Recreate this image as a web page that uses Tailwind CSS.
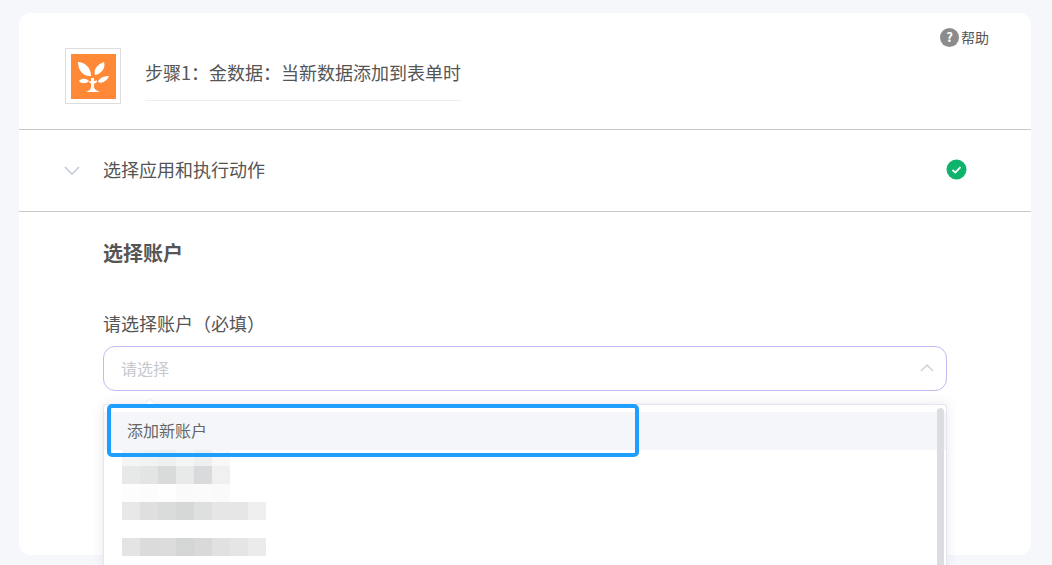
<!DOCTYPE html>
<html lang="zh-CN">
<head>
	<meta charset="UTF-8">
	<script src="https://cdn.jsdelivr.net/npm/@tailwindcss/browser@4"></script>
	<title>步骤1</title>
</head>
<body class="relative h-[565px] overflow-hidden bg-[#f6f7fb] pt-[13px] pl-[19px] font-['Noto_Sans_CJK_SC','Liberation_Sans',sans-serif] text-[#555]">

<div class="relative h-[542px] w-[1012px] rounded-xl bg-white">
	<!-- Header -->
	<div class="relative flex h-[117px] items-start border-b border-[#c8c8c8] pt-[35px] pl-[46px]">
		<div class="flex h-[56px] w-[56px] items-center justify-center border border-[#ddd]">
			<svg class="h-[45px] w-[45px]" viewBox="0 0 45 45">
				<rect width="45" height="45" fill="#ff8936"/>
				<g fill="#fff">
					<path d="M7 8C13 8 20 13 20 22C13 23 7 17 7 8Z"/>
					<path d="M33 8C35 14 30 20 24 21C22 15 27 10 33 8Z"/>
					<path d="M8 27C10 24 15 24 18 27C15 30 10 30 8 27Z"/>
					<path d="M38 22C36 27 31 30 27 28C28 24 33 22 38 22Z"/>
					<path d="M20 24H23V27L26 26.5V28L23 30V33C23 35 26 37 29 38H15C18 37 20 35 20 33V29.500L18 28V27L20 27.500Z"/>
				</g>
			</svg>
		</div>
		<div class="ml-6 h-[53px] w-[316px] border-b border-[#eee] pt-[11px] text-[18px] leading-[26px] whitespace-nowrap">步骤1：金数据：当新数据添加到表单时</div>
		<div class="absolute top-[14px] right-[42px] flex items-center gap-[2px] text-sm leading-5">
			<span class="flex h-[19px] w-[19px] items-center justify-center rounded-full bg-[#8c8c8c] text-[13px] font-bold text-white">?</span>
			<span>帮助</span>
		</div>
	</div>

	<!-- Collapsed step -->
	<div class="flex h-[82px] items-center border-b border-[#c8c8c8] pr-[64px] pl-[45px]">
		<svg class="h-[9px] w-[16px]" viewBox="0 0 16 9" fill="none" stroke="#b9c6d6" stroke-width="1.3">
			<path d="M1 1L8 8L15 1"/>
		</svg>
		<span class="mb-[2px] ml-[23px] text-[18px]">选择应用和执行动作</span>
		<svg class="mt-[-2px] ml-auto h-[21px] w-[21px]" viewBox="0 0 21 21">
			<circle cx="10.5" cy="10.5" r="10" fill="#0fb46c"/>
			<path d="M6.5 11L9.3 13.6L14.5 8.2" fill="none" stroke="#fff" stroke-width="1.8"/>
		</svg>
	</div>

	<!-- Account form -->
	<div class="pt-[26px] pl-[84px]">
		<h3 class="text-xl leading-[30px] font-bold">选择账户</h3>
		<label class="mt-[42px] block text-[18px] leading-[26px]">请选择账户（必填）</label>
		<div class="mt-[10px] flex h-[45px] w-[844px] items-center justify-between rounded-xl border border-[#c3baf3] pr-[12px] pb-[2px] pl-[17px] text-base text-[#c6c8cf]">
			<span>请选择</span>
			<svg class="mt-[1px] h-[8px] w-[14px]" viewBox="0 0 14 8" fill="none" stroke="#cdcfd3" stroke-width="1.3">
				<path d="M1 7L7 1L13 7"/>
			</svg>
		</div>
	</div>
</div>

<!-- Dropdown, runs past the bottom of the card -->
<div class="absolute top-[404px] left-[103px] h-[161px] w-[844px] rounded-t border border-b-0 border-[#e6e6f2] bg-white pt-[7px] shadow-[0_0_12px_rgba(40,40,80,0.1)]">
	<div class="absolute top-[-5px] left-[42px] h-2 w-2 rotate-45 border-t border-l border-[#eeeef4] bg-white"></div>
	<div class="h-[38px] bg-[#f5f6fa]"></div>
	<div class="ml-[18px] flex h-[16px]">
		<i class="w-[18px] bg-[#f3f4f4]"></i><i class="w-[18px] bg-[#f1f2f2]"></i><i class="w-[18px] bg-[#eeefef]"></i><i class="w-[18px] bg-[#f3f4f4]"></i><i class="w-[18px] bg-[#eeefef]"></i><i class="w-[18px] bg-[#f8f8f8]"></i>
	</div>
	<div class="ml-[18px] flex h-[18px]">
		<i class="w-[18px] bg-[#e7e8e8]"></i><i class="w-[18px] bg-[#e3e4e4]"></i><i class="w-[18px] bg-[#d9dada]"></i><i class="w-[18px] bg-[#e8e9e9]"></i><i class="w-[18px] bg-[#d9dadb]"></i><i class="w-[18px] bg-[#f0f0f0]"></i>
	</div>
	<div class="ml-[18px] flex h-[18px]">
		<i class="w-[18px] bg-[#fdfdfd]"></i><i class="w-[18px] bg-[#fcfcfc]"></i><i class="w-[18px] bg-[#fefefe]"></i><i class="w-[18px] bg-[#fafafa]"></i><i class="w-[18px] bg-[#fbfbfb]"></i><i class="w-[18px] bg-[#fafafa]"></i>
	</div>
	<div class="ml-[18px] flex h-[18px]">
		<i class="w-[18px] bg-[#e8e8e8]"></i><i class="w-[18px] bg-[#dfdfdf]"></i><i class="w-[18px] bg-[#dadbdb]"></i><i class="w-[18px] bg-[#d6d7d7]"></i><i class="w-[18px] bg-[#dedfdf]"></i><i class="w-[18px] bg-[#e6e6e6]"></i><i class="w-[18px] bg-[#e6e6e6]"></i><i class="w-[18px] bg-[#efefef]"></i>
	</div>
	<div class="h-[18px]"></div>
	<div class="ml-[18px] flex h-[18px]">
		<i class="w-[18px] bg-[#e4e4e4]"></i><i class="w-[18px] bg-[#dbdbdb]"></i><i class="w-[18px] bg-[#dcdcdc]"></i><i class="w-[18px] bg-[#d4d5d5]"></i><i class="w-[18px] bg-[#d9d9d9]"></i><i class="w-[18px] bg-[#e1e1e1]"></i><i class="w-[18px] bg-[#e5e5e5]"></i><i class="w-[18px] bg-[#ebebeb]"></i>
	</div>
	<div class="absolute top-[3px] right-[2px] bottom-0 w-[7px] rounded-t bg-[#dcdde0]"></div>
</div>

<!-- Annotation box over the first option -->
<div class="absolute top-[404px] left-[107px] flex h-[53px] w-[532px] items-center rounded-[5px] border-4 border-[#1e9fff] pb-[2px] pl-[16px] text-base text-[#666]">添加新账户</div>

</body>
</html>
